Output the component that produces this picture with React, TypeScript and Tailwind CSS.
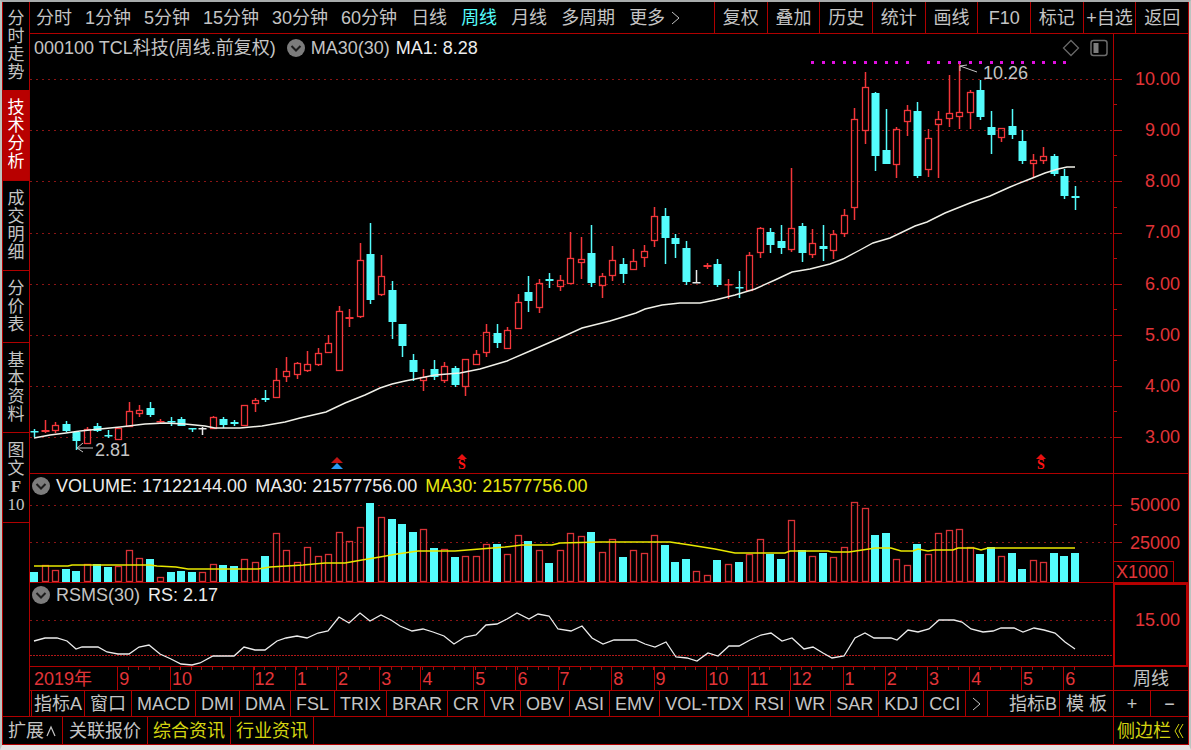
import React from "react";

type Kind = "u" | "d" | "w";
// kind, high, body top, body bottom, low, volume top (chart units)
type Candle = [Kind, number, number, number, number, number];

const CANDLES: Candle[] = [
  ["d", 429, 431, 432, 437, 573], ["u", 420, 430, 432, 433, 566], ["u", 422, 425, 430, 433, 571], ["d", 421, 424, 431, 432, 570],
  ["d", 432, 432, 441, 450, 572], ["u", 427, 429, 443, 443, 565], ["d", 423, 426, 431, 432, 565], ["d", 430, 435, 436, 438, 568],
  ["u", 428, 428, 439, 439, 567], ["u", 402, 411, 426, 426, 551], ["u", 405, 410, 413, 417, 559], ["d", 402, 408, 415, 417, 560],
  ["u", 419, 421, 422, 423, 578], ["d", 417, 421, 422, 426, 573], ["d", 417, 419, 426, 426, 572], ["d", 428, 428, 429, 432, 573],
  ["w", 427, 428, 429, 435, 573], ["u", 416, 417, 428, 428, 565], ["d", 417, 419, 425, 428, 566], ["d", 420, 422, 424, 426, 567],
  ["u", 405, 405, 425, 425, 560], ["u", 398, 400, 403, 412, 563], ["d", 390, 398, 400, 402, 557], ["u", 368, 380, 397, 397, 534],
  ["u", 357, 371, 376, 382, 551], ["u", 362, 363, 374, 379, 563], ["u", 351, 364, 370, 372, 548], ["u", 348, 353, 364, 366, 557],
  ["u", 335, 343, 352, 352, 555], ["u", 306, 311, 370, 370, 533], ["u", 309, 317, 319, 327, 542], ["u", 243, 260, 316, 318, 528],
  ["d", 223, 254, 300, 304, 504], ["u", 255, 276, 294, 296, 518], ["d", 281, 290, 322, 339, 520], ["d", 324, 324, 346, 357, 525],
  ["d", 354, 360, 372, 381, 533], ["u", 369, 377, 380, 391, 530], ["d", 360, 369, 377, 380, 549], ["u", 362, 366, 380, 383, 550],
  ["d", 366, 368, 385, 387, 558], ["u", 359, 359, 386, 396, 557], ["u", 350, 354, 364, 364, 557], ["u", 324, 332, 352, 357, 545],
  ["d", 324, 333, 343, 348, 545], ["u", 327, 330, 348, 348, 555], ["u", 294, 302, 328, 328, 536], ["d", 276, 292, 301, 312, 542],
  ["u", 279, 283, 307, 313, 551], ["d", 273, 279, 281, 288, 564], ["u", 275, 280, 286, 291, 551], ["u", 232, 258, 283, 283, 534],
  ["u", 237, 259, 262, 279, 537], ["d", 225, 253, 283, 287, 533], ["u", 273, 276, 285, 298, 553], ["u", 246, 260, 275, 281, 540],
  ["d", 258, 264, 274, 283, 558], ["u", 249, 261, 269, 269, 551], ["u", 245, 251, 257, 267, 554], ["u", 207, 216, 240, 247, 536],
  ["d", 208, 216, 238, 264, 546], ["d", 234, 238, 244, 258, 563], ["d", 241, 248, 282, 285, 560], ["w", 270, 282, 283, 283, 572],
  ["u", 263, 265, 267, 269, 576], ["d", 259, 264, 285, 287, 561], ["u", 279, 284, 285, 299, 565], ["d", 271, 287, 288, 298, 563],
  ["u", 252, 255, 290, 290, 555], ["u", 227, 228, 252, 258, 540], ["d", 228, 232, 245, 253, 555], ["d", 225, 241, 248, 254, 560],
  ["u", 168, 228, 249, 252, 521], ["d", 223, 226, 253, 262, 551], ["u", 229, 243, 254, 258, 557], ["d", 225, 246, 249, 261, 554],
  ["u", 230, 234, 250, 259, 558], ["u", 209, 215, 233, 237, 548], ["u", 108, 119, 207, 220, 503], ["u", 72, 87, 130, 144, 509],
  ["d", 92, 93, 156, 171, 536], ["d", 109, 150, 164, 164, 534], ["u", 127, 129, 164, 178, 560], ["u", 105, 110, 121, 136, 566],
  ["d", 102, 111, 176, 178, 545], ["u", 129, 138, 169, 177, 555], ["u", 111, 119, 124, 178, 534], ["u", 75, 113, 118, 127, 531],
  ["u", 63, 112, 116, 129, 530], ["u", 90, 92, 112, 129, 548], ["d", 80, 90, 117, 120, 555], ["d", 111, 127, 135, 154, 548],
  ["u", 128, 128, 137, 142, 557], ["d", 109, 126, 135, 139, 554], ["d", 130, 141, 161, 164, 570], ["u", 154, 160, 163, 177, 561],
  ["u", 147, 156, 160, 164, 563], ["d", 154, 156, 174, 176, 554], ["d", 169, 176, 196, 199, 557], ["d", 186, 196, 198, 210, 554],
];

const COLORS = { u: "#f2363a", d: "#54fcfc", w: "#e8e8e8" };
const candleX = (i: number) => Math.round(34 + i * 10.515);

const PRICE_MA =
  "34,438 50,435 66,433 80,431 100,429 120,427 145,424 165,423 185,424 205,426 215,428 240,428 262,426 285,422 300,418 326,412 345,403 365,395 380,388 392,384 405,381 420,378 435,375 460,373 480,369 507,361 530,351 560,338 582,328 610,321 636,313 645,309 662,305 680,303 700,303 715,300 735,295 755,289 775,280 792,272 810,269 830,264 843,259 860,250 873,243 890,238 915,226 927,222 945,213 970,203 990,196 1010,187 1030,179 1045,173 1058,169 1067,167 1075,167";
const VOLUME_MA =
  "34,566 68,566 72,565 150,565 157,566 176,567 188,569 258,569 270,567 303,565 325,563 345,563 362,560 380,557 397,554 418,551 455,551 480,549 505,547 522,545 552,545 560,543 600,542 670,542 690,545 715,549 735,553 785,553 790,551 828,551 832,552 849,552 869,549 875,548 891,548 901,551 913,551 918,549 928,551 934,550 953,550 958,548 974,548 981,550 988,548 1075,548";
const RS_LINE =
  "34,641 45,638 57,638 67,641 76,649 82,647 98,647 107,652 118,654 129,654 139,647 149,645 160,654 171,659 181,664 192,665 200,663 213,656 234,656 244,647 255,650 265,650 277,641 286,638 297,636 307,638 318,633 328,631 339,617 349,623 360,613 370,621 381,615 391,620 400,626 412,631 423,629 433,632 444,636 454,644 465,637 476,635 486,625 497,624 507,619 517,613 529,619 538,614 549,616 558,629 571,631 582,626 592,638 603,644 614,640 636,640 645,644 655,647 666,642 676,657 687,658 697,661 708,653 718,656 729,646 739,646 750,640 761,635 771,633 782,641 792,638 804,649 813,647 823,653 832,658 844,656 855,638 865,633 874,638 891,638 897,640 908,630 918,632 929,629 939,620 954,620 962,622 971,629 983,632 993,631 1001,628 1014,628 1023,632 1034,628 1044,630 1055,633 1065,642 1075,649";

const PRICE_LEVELS = [79, 130, 181, 233, 284, 335, 386, 437];
const PRICE_LABELS = ["10.00", "9.00", "8.00", "7.00", "6.00", "5.00", "4.00", "3.00"];

const GridLine = ({ y }: { y: number }) => (
  <line x1={30} x2={1113} y1={y} y2={y} stroke="#8a1414" strokeWidth={1} strokeDasharray="2 4" shapeRendering="crispEdges" />
);

const Ticks = ({ top, height, major, minor }: { top: number; height: number; major: number[]; minor: number[] }) => (
  <svg className="absolute left-0 top-0 w-2" style={{ height }} viewBox={`0 ${top} 8 ${height}`} shapeRendering="crispEdges" aria-hidden="true">
    {major.map((y) => <rect key={y} x={0} y={y} width={8} height={1} fill="#b01010" />)}
    {minor.map((y) => <rect key={y} x={0} y={y} width={3} height={1} fill="#b01010" />)}
  </svg>
);

const Chevron = ({ label }: { label: string }) => (
  <button type="button" aria-label={label} className="shrink-0">
    <svg width={18} height={18} viewBox="0 0 18 18" className="block" aria-hidden="true">
      <circle cx={9} cy={9} r={9} fill="#7c7c7c" />
      <path d="M4.5 7l4.5 4.5L13.5 7" fill="none" stroke="#1c1c1c" strokeWidth={2} />
    </svg>
  </button>
);

const SellMark = ({ x }: { x: number }) => (
  <g>
    <path d={`M${x} 454l5 5h-10z`} fill="#e81010" />
    <text x={x} y={469} textAnchor="middle" fill="#ff1414" fontSize={14} fontWeight={700} fontFamily="Liberation Serif, serif">S</text>
  </g>
);

const PriceChart = () => (
  <svg className="block h-full w-full" viewBox="30 34 1083 439" preserveAspectRatio="none" aria-label="K线图">
    {PRICE_LEVELS.map((y) => <GridLine key={y} y={y} />)}
    {CANDLES.map(([kind, high, top, bottom, low], i) => {
      const x = candleX(i);
      const color = COLORS[kind];
      const h = bottom - top;
      return (
        <g key={i}>
          {kind === "u" && h > 2 ? (
            <>
              <rect x={x - 0.25} y={high} width={1.5} height={top - high} fill={color} />
              <rect x={x - 0.25} y={bottom} width={1.5} height={low - bottom} fill={color} />
              <rect x={x - 2.5} y={top + 0.5} width={6} height={h} fill="none" stroke={color} strokeWidth={1.3} />
            </>
          ) : (
            <>
              <rect x={x - 0.25} y={high} width={1.5} height={low - high} fill={color} />
              <rect x={x - 3.500} y={top} width={8} height={h < 2 ? 1.5 : h} fill={color} />
            </>
          )}
        </g>
      );
    })}
    {CANDLES.map((_, i) =>
      i >= 74 && i <= 98 && i !== 84 ? <rect key={i} x={candleX(i) - 1} y={61} width={3} height={3} fill="#e010e0" /> : null
    )}
    <polyline points={PRICE_MA} fill="none" stroke="#f0f0e8" strokeWidth={1.4} />
    <path d="M93 448H77M77 448l6-5M77 448l6 4" fill="none" stroke="#c4c4c4" />
    <path d="M977 72L960 66M960 71V66l7-1" fill="none" stroke="#c4c4c4" />
    <path d="M337 457l6 6h-12z" fill="#c01414" />
    <path d="M337 463l6 6h-12z" fill="#2a9cf4" />
    <SellMark x={462} />
    <SellMark x={1041} />
  </svg>
);

const VolumeChart = () => (
  <svg className="block h-full w-full" viewBox="30 474 1083 108" preserveAspectRatio="none" aria-label="成交量">
    <GridLine y={505} />
    <GridLine y={542} />
    {CANDLES.map(([kind, , , , , top], i) => {
      const x = candleX(i);
      return kind === "d" ? (
        <rect key={i} x={x - 4} y={top - 1} width={8} height={583 - top} fill="#54fcfc" />
      ) : (
        <rect key={i} x={x - 2.5} y={top - 0.5} width={6} height={582 - top} fill="none" stroke="#d83236" strokeWidth={1.3} />
      );
    })}
    <polyline points={VOLUME_MA} fill="none" stroke="#e8e800" strokeWidth={1.5} />
  </svg>
);

const RsmsChart = () => (
  <svg className="block h-full w-full" viewBox="30 583 1083 83" preserveAspectRatio="none" aria-label="RSMS">
    <g shapeRendering="crispEdges">
      <GridLine y={620} />
      <line x1={30} x2={1113} y1={655} y2={655} stroke="#b01818" strokeDasharray="2 1" />
    </g>
    <polyline points={RS_LINE} fill="none" stroke="#ececec" strokeWidth={1.3} />
  </svg>
);

const SIDE = ["分时走势", "技术分析", "成交明细", "分价表", "基本资料"];

const Sidebar = () => (
  <nav className="flex w-[27px] shrink-0 flex-col border-r border-[#b00000] text-[17px] leading-[18px]">
    {SIDE.map((item, i) => (
      <button
        key={item}
        type="button"
        className={
          i === 1
            ? "flex flex-col items-center border-b border-[#b00000] bg-[#b80000] py-[9px] text-white"
            : i === 0
              ? "flex flex-col items-center py-2"
              : "flex flex-col items-center border-b border-[#b00000] pb-2 pt-[9px]"
        }
      >
        {[...item].map((c) => <span key={c}>{c}</span>)}
      </button>
    ))}
    <button type="button" className="flex flex-col items-center border-b border-[#b00000] pb-2 pt-[9px]">
      <span>图</span>
      <span>文</span>
      <span className="font-['Liberation_Serif',serif] font-bold">F</span>
      <span className="font-['Liberation_Serif',serif]">10</span>
    </button>
  </nav>
);

const MINUTES = ["分时", "1分钟", "5分钟", "15分钟", "30分钟", "60分钟"];
const PERIODS = ["日线", "周线", "月线", "多周期"];
const TOOLS = ["复权", "叠加", "历史", "统计", "画线", "F10", "标记", "+自选", "返回"];

const Toolbar = () => (
  <header className="flex h-8 border-b border-[#b00000]">
    <div className="flex flex-1 items-center gap-[14px] whitespace-nowrap pl-[6px]">
      <div className="flex gap-[13px]">
        {MINUTES.map((t) => <button key={t} type="button">{t}</button>)}
      </div>
      <div className="flex gap-[14px]">
        {PERIODS.map((t) => (
          <button key={t} type="button" className={t === "周线" ? "text-[#54fcfc]" : ""}>{t}</button>
        ))}
        <button type="button" className="flex items-center gap-[6px]">
          更多
          <svg width={9} height={14} viewBox="0 0 9 14" aria-hidden="true">
            <path d="M1 1l7 6-7 6" fill="none" stroke="#c4c4c4" />
          </svg>
        </button>
      </div>
    </div>
    <div className="grid w-[474px] grid-cols-9 whitespace-nowrap">
      {TOOLS.map((t) => (
        <button key={t} type="button" className="flex items-center justify-center border-l border-[#b00000]">{t}</button>
      ))}
    </div>
  </header>
);

const MONTHS: [string, number][] = [
  ["2019年", 87], ["9", 53], ["10", 84], ["12", 42], ["1", 41], ["2", 43], ["3", 41], ["4", 53], ["5", 42], ["6", 42], ["7", 54],
  ["8", 42], ["9", 53], ["10", 41], ["11", 42], ["12", 53], ["1", 42], ["2", 42], ["3", 42], ["4", 52], ["5", 42], ["6", 50],
];

const INDICATORS = ["MACD", "DMI", "DMA", "FSL", "TRIX", "BRAR", "CR", "VR", "OBV", "ASI", "EMV", "VOL-TDX", "RSI", "WR", "SAR", "KDJ", "CCI"];

const tab = "border-r border-[#b00000] px-[5px]";

export default function App() {
  return (
    <div className="min-h-screen border-x-2 border-b-[5px] border-t-2 border-x-[#bcc4c0] border-b-[#e6e0e0] border-t-[#a8acac] bg-black font-['Liberation_Sans','Noto_Sans_CJK_SC',sans-serif] text-[18px] leading-6 text-[#c4c4c4]">
      <div className="border-x border-b border-[#b00000]">
        <div className="flex">
          <Sidebar />
          <main className="min-w-0 flex-1">
            <Toolbar />

            <section className="flex h-[440px] border-b border-[#b00000]">
              <div className="relative min-w-0 flex-1">
                <PriceChart />
                <div className="absolute inset-x-0 top-[2px] flex items-center whitespace-nowrap pl-1 pr-[5px]">
                  <h1>000100 TCL科技(周线.前复权)</h1>
                  <div className="flex flex-1 items-center gap-[6px] pl-[11px]">
                    <Chevron label="主图指标" />
                    <span>MA30(30)</span>
                    <span className="text-[#ececec]">MA1: 8.28</span>
                  </div>
                  <div className="flex items-center gap-[10px]">
                    <button type="button" aria-label="标注">
                      <svg width={18} height={18} viewBox="0 0 18 18" className="block" aria-hidden="true">
                        <path d="M9 1.5L16.500 9 9 16.500 1.500 9z" fill="none" stroke="#686868" strokeWidth={1.3} />
                      </svg>
                    </button>
                    <button type="button" aria-label="面板">
                      <svg width={18} height={18} viewBox="0 0 18 18" className="block" aria-hidden="true">
                        <rect x={1} y={1.500} width={16} height={15} rx={2.500} fill="none" stroke="#6c6c6c" strokeWidth={1.500} />
                        <rect x={3.500} y={4} width={5} height={10} fill="#7c7c7c" />
                      </svg>
                    </button>
                  </div>
                </div>
                <span className="absolute left-[6%] top-[404px]">2.81</span>
                <span className="absolute left-[88%] top-[27px]">10.26</span>
              </div>
              <div className="relative flex w-[75px] shrink-0 flex-col justify-between border-l border-[#b00000] pb-6 pr-2 pt-[33px] text-right text-[#e23438]">
                <Ticks top={34} height={439} major={PRICE_LEVELS} minor={[104, 155, 207, 258, 309, 360, 411]} />
                {PRICE_LABELS.map((l) => <span key={l}>{l}</span>)}
              </div>
            </section>

            <section className="flex h-[109px] border-b border-[#b00000]">
              <div className="relative min-w-0 flex-1">
                <VolumeChart />
                <div className="absolute left-[2px] top-0 flex items-center gap-[6px] whitespace-nowrap text-[#ececec]">
                  <Chevron label="成交量指标" />
                  <span>VOLUME: 17122144.00</span>
                  <span className="pl-[2px]">MA30: 21577756.00</span>
                  <span className="pl-[2px] text-[#e8e810]">MA30: 21577756.00</span>
                </div>
              </div>
              <div className="relative flex w-[75px] shrink-0 flex-col items-end border-l border-[#b00000] pt-[19px] text-[#e23438]">
                <Ticks top={474} height={108} major={[505, 542]} minor={[524]} />
                <span className="pr-2">50000</span>
                <span className="mt-[14px] pr-2">25000</span>
                <span className="mt-[6px] w-[60px] self-start border-r border-t border-[#b00000] pl-[2px] leading-[21px]">X1000</span>
              </div>
            </section>

            <section className="flex h-[84px]">
              <div className="relative min-w-0 flex-1 border-b border-[#b00000]">
                <RsmsChart />
                <div className="absolute left-[2px] top-0 flex items-center gap-[6px] whitespace-nowrap">
                  <Chevron label="RSMS指标" />
                  <span>RSMS(30)</span>
                  <span className="pl-[2px] text-[#ececec]">RS: 2.17</span>
                </div>
              </div>
              <div className="w-[75px] shrink-0 border-2 border-[#b80000] pr-[6px] pt-[23px] text-right text-[#e23438]">15.00</div>
            </section>

            <section className="flex h-6 border-b border-[#b00000]">
              <div className="relative flex min-w-0 flex-1 leading-6 text-[#e23438]">
                <svg className="absolute inset-x-0 top-0 h-[3px] w-full" viewBox="30 0 1083 3" preserveAspectRatio="none" shapeRendering="crispEdges" aria-hidden="true">
                  {CANDLES.map((_, i) => (i > 8 ? <rect key={i} x={candleX(i) - 1} y={0} width={1} height={3} fill="#a01010" /> : null))}
                </svg>
                {MONTHS.map(([label, width], i) => (
                  <span
                    key={i}
                    className={i === 0 ? "min-w-0 pl-1" : "min-w-0 border-l border-[#b00000] pl-px"}
                    style={{ flex: `${width} 1 0px` }}
                  >
                    {label}
                  </span>
                ))}
              </div>
              <div className="w-[75px] shrink-0 border-l border-[#b00000] text-center">周线</div>
            </section>

            <section className="flex h-[25px] whitespace-nowrap">
              <div className="flex min-w-0 flex-1 pl-px">
                <button type="button" className="border-x border-[#b00000] px-[2px]">指标A</button>
                <button type="button" className={tab}>窗口</button>
                {INDICATORS.map((t) => <button key={t} type="button" className={tab}>{t}</button>)}
                <button type="button" aria-label="更多指标" className="border-r border-[#b00000] px-[6px]">
                  <svg width={9} height={14} viewBox="0 0 9 14" aria-hidden="true">
                    <path d="M1 1l7 6-7 6" fill="none" stroke="#c4c4c4" />
                  </svg>
                </button>
                <div className="flex flex-1 justify-end">
                  <button type="button" className="border-r border-[#b00000] px-[2px]">指标B</button>
                  <button type="button" className="px-[6px]">模 板</button>
                </div>
              </div>
              <div className="grid w-[75px] shrink-0 grid-cols-2 border-l border-[#b00000]">
                <button type="button" className="border-r border-[#b00000]">+</button>
                <button type="button">−</button>
              </div>
            </section>
          </main>
        </div>

        <footer className="flex h-7 whitespace-nowrap border-t border-[#b00000]">
          <button type="button" className="flex items-center gap-[2px] border-r border-[#b00000] pl-[5px] pr-[6px]">
            扩展
            <svg width={10} height={12} viewBox="0 0 10 12" aria-hidden="true">
              <path d="M1 11l4-9 4 9" fill="none" stroke="#c4c4c4" strokeWidth={1.2} />
            </svg>
          </button>
          <button type="button" className="border-r border-[#b00000] px-[6px]">关联报价</button>
          <button type="button" className="border-r border-[#b00000] px-[5px] text-[#d4d410]">综合资讯</button>
          <button type="button" className="border-r border-[#b00000] px-[5px] text-[#d4d410]">行业资讯</button>
          <button type="button" className="ml-auto flex w-[75px] items-center justify-between border-l border-[#b00000] pl-[3px] pr-1 text-[#d4d410]">
            侧边栏
            <svg width={10} height={16} viewBox="0 0 10 16" aria-hidden="true">
              <path d="M5 1L1 8l4 7M9 1L5 8l4 7" fill="none" stroke="#d4d410" />
            </svg>
          </button>
        </footer>
      </div>
    </div>
  );
}
